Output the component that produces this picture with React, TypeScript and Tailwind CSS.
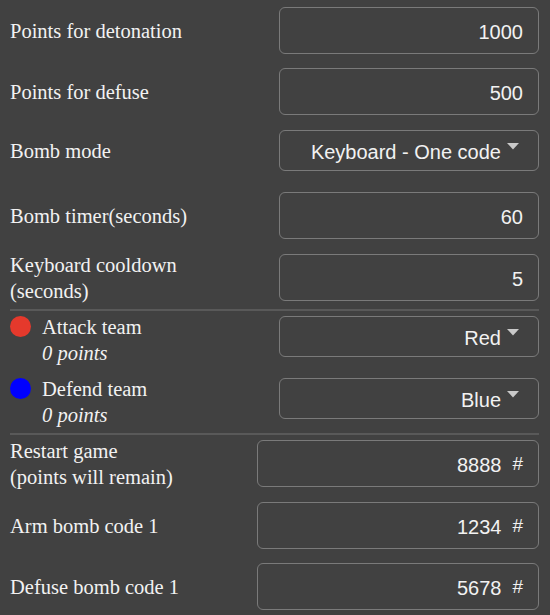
import React from "react";

const serif = { fontFamily: '"Liberation Serif", "Times New Roman", serif' };

function Box({ value, hash, wide }: { value: string; hash?: boolean; wide?: boolean }) {
  return (
    <div
      className={`${wide ? "w-[282px]" : "w-[260px]"} h-[47px] shrink-0 rounded-[6px] border border-[#7a7a7a] flex items-center justify-end pr-[15px] text-[20px] text-[#f2f2f2] font-['Liberation_Sans',Arial,sans-serif]`}
    >
      <span className="pt-[2px]">{value}</span>
      {hash && <span className="ml-[11px] pt-[2px] text-[19px]">#</span>}
    </div>
  );
}

function Select({ value }: { value: string }) {
  return (
    <div className="w-[260px] h-[41px] shrink-0 rounded-[6px] border border-[#7a7a7a] flex items-start justify-end pr-[19px] text-[20px] text-[#f2f2f2] font-['Liberation_Sans',Arial,sans-serif]">
      <span className="mt-[9px] leading-[24px]">{value}</span>
      <svg width="12" height="7" viewBox="0 0 12 7" className="ml-[6px] mt-[12px]">
        <path d="M0 0 L12 0 L6 6.5 Z" fill="#c9c9c9" />
      </svg>
    </div>
  );
}

function Row({ label, children, mt }: { label: React.ReactNode; children: React.ReactNode; mt: string }) {
  return (
    <div className={`flex items-center justify-between ${mt}`}>
      <div className="text-[20.5px] leading-[25.5px] text-[#f2f2f2] pt-[2px]" style={serif}>
        {label}
      </div>
      {children}
    </div>
  );
}

function TeamRow({ color, name, value, mt }: { color: string; name: string; value: string; mt: string }) {
  return (
    <div className={`flex items-start justify-between ${mt}`}>
      <div className="flex items-start gap-[11px] -mt-[2px]" style={serif}>
        <div className={`mt-[2px] w-[21px] h-[21px] rounded-full ${color}`} />
        <div className="text-[20.5px] leading-[26px] text-[#f2f2f2]">
          <div>{name}</div>
          <div className="italic">0 points</div>
        </div>
      </div>
      <Select value={value} />
    </div>
  );
}

export default function App() {
  return (
    <div className="w-[550px] h-[615px] bg-[#414141] pl-[10px] pr-[11px] pt-[7px] overflow-hidden">
      <Row label="Points for detonation" mt="">
        <Box value="1000" />
      </Row>
      <Row label="Points for defuse" mt="mt-[14px]">
        <Box value="500" />
      </Row>
      <Row label="Bomb mode" mt="mt-[15px]">
        <Select value="Keyboard - One code" />
      </Row>
      <Row label="Bomb timer(seconds)" mt="mt-[21px]">
        <Box value="60" />
      </Row>
      <Row
        label={
          <>
            Keyboard cooldown
            <br />
            (seconds)
          </>
        }
        mt="mt-[12px]"
      >
        <Box value="5" />
      </Row>

      <div className="mt-[5px] h-[2px] bg-[#595959]" />

      <TeamRow color="bg-[#e5392c]" name="Attack team" value="Red" mt="mt-[5px]" />
      <TeamRow color="bg-[#0000ff]" name="Defend team" value="Blue" mt="mt-[12px]" />

      <div className="mt-[5px] h-[2px] bg-[#595959]" />

      <Row
        label={
          <>
            Restart game
            <br />
            (points will remain)
          </>
        }
        mt="mt-[2px]"
      >
        <Box value="8888" hash wide />
      </Row>
      <Row label="Arm bomb code 1" mt="mt-[12px]">
        <Box value="1234" hash wide />
      </Row>
      <Row label="Defuse bomb code 1" mt="mt-[14px]">
        <Box value="5678" hash wide />
      </Row>
    </div>
  );
}
